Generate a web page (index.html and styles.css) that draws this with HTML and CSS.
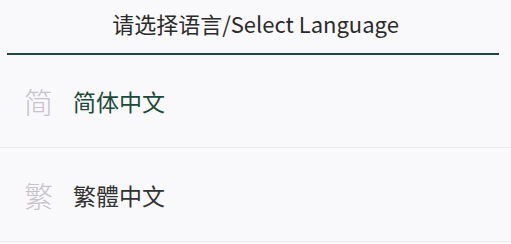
FILE: index.html
```html
<!DOCTYPE html>
<html lang="zh">
<head>
    <meta charset="UTF-8">
    <meta name="viewport" content="width=device-width, initial-scale=1.0">
    <title>Select Language</title>
    <link rel="stylesheet" href="styles.css">
</head>
<body>
    <div class="dialog">
        <div class="dialog-title">请选择语言/Select Language</div>
        <div class="title-line"></div>
        <ul class="lang-list">
            <li class="lang-item active">
                <span class="lang-icon">简</span>
                <span class="lang-name">简体中文</span>
            </li>
            <li class="lang-item">
                <span class="lang-icon">繁</span>
                <span class="lang-name">繁體中文</span>
            </li>
        </ul>
    </div>
</body>
</html>
```

FILE: styles.css
```css
body {
    margin: 0;
    background-color: #f9f8fa;
    font-family: "Noto Sans CJK SC", "Noto Sans", sans-serif;
    width: 511px;
    height: 244px;
    overflow: hidden;
}
.dialog {
    display: flex;
    flex-direction: column;
}
.dialog-title {
    height: 47px;
    line-height: 47px;
    text-align: center;
    font-size: 22px;
    color: #2b2b2b;
}
.title-line {
    height: 2px;
    margin: 6px 12px 0 7px;
    background-color: #1f4a3e;
}
.lang-list {
    list-style: none;
    margin: 0;
    padding: 0;
}
.lang-item {
    display: flex;
    align-items: center;
    height: 93px;
    border-bottom: 1px solid #eceaed;
    padding-left: 24px;
}
.lang-item:first-child {
    height: 92px;
}
.lang-icon {
    width: 49px;
    font-size: 29px;
    font-weight: 300;
    color: #c7c3ca;
}
.lang-name {
    font-size: 23px;
    color: #333;
}
.lang-item.active .lang-name {
    color: #1c4a38;
}
```
